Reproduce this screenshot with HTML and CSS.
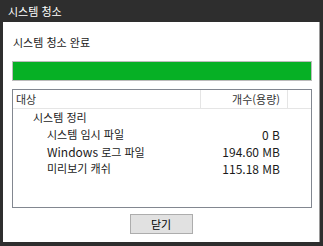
FILE: index.html
```html
<!DOCTYPE html>
<html lang="ko">
<head>
<meta charset="utf-8">
<link rel="stylesheet" href="styles.css">
</head>
<body>
<div class="window">
  <div class="titlebar">시스템 청소</div>
  <div class="client">
    <div class="heading">시스템 청소 완료</div>
    <div class="progress"><div class="fill"></div></div>
    <div class="listbox">
      <div class="header">
        <div class="hcell name">대상</div>
        <div class="hcell size">개수(용량)</div>
        <div class="hcell rest"></div>
      </div>
      <div class="row"><div class="name lvl1">시스템 정리</div><div class="size"></div></div>
      <div class="row"><div class="name lvl2">시스템 임시 파일</div><div class="size">0 B</div></div>
      <div class="row"><div class="name lvl2"><span class="lat">Windows</span> 로그 파일</div><div class="size">194.60 MB</div></div>
      <div class="row"><div class="name lvl2">미리보기 캐쉬</div><div class="size">115.18 MB</div></div>
    </div>
    <div class="actions"><button class="btn">닫기</button></div>
  </div>
</div>
</body>
</html>
```
FILE: styles.css
```css
* { box-sizing: border-box; }
html, body { margin: 0; padding: 0; background: #2e2e2e; }
body {
  font-family: "Noto Sans CJK KR", "Noto Sans", sans-serif;
  font-size: 11px;
  color: #000;
}
.window {
  width: 323px;
  height: 246px;
  background: #2e2e2e;
  display: flex;
  flex-direction: column;
}
.titlebar {
  height: 22px;
  line-height: 22px;
  padding-left: 8px;
  color: #ffffff;
  font-size: 11px;
}
.client {
  flex: 1;
  margin: 0 3px 4px 3px;
  background: #ffffff;
  border-right: 1px solid #9a9a9a;
  display: flex;
  flex-direction: column;
  padding: 12px 0 0 9px;
}
.heading {
  height: 16px;
  line-height: 16px;
  padding-left: 1px;
  color: #1a1a1a;
}
.progress {
  margin-top: 11px;
  width: 300px;
  height: 20px;
  border: 1px solid #bcbcbc;
  background: #e6e6e6;
}
.fill {
  width: 100%;
  height: 100%;
  background: #06b025;
}
.listbox {
  margin-top: 8px;
  width: 300px;
  height: 119px;
  border: 1px solid #828790;
  background: #fff;
}
.header {
  display: flex;
  height: 19px;
  border-bottom: 1px solid #e5e5e5;
}
.hcell {
  height: 18px;
  line-height: 18px;
  border-right: 1px solid #e5e5e5;
}
.header .name { width: 188px; padding-left: 3px; color: #333; }
.header .size { width: 87px; text-align: right; padding-right: 7px; color: #333; }
.header .rest { flex: 1; border-right: none; }
.row {
  display: flex;
  height: 17px;
  line-height: 17px;
  color: #1a1a1a;
}
.row .name { width: 188px; }
.row .size { width: 87px; text-align: right; padding-right: 8px; font-size: 12px; }
.lat { font-size: 12px; }
.lvl1 { padding-left: 20px; }
.lvl2 { padding-left: 34px; }
.actions {
  display: flex;
  justify-content: center;
  margin-top: 6px;
  padding-right: 9px;
}
.btn {
  width: 63px;
  height: 20px;
  padding: 0;
  font-family: inherit;
  font-size: 11px;
  line-height: 18px;
  background: #e1e1e1;
  border: 1px solid #adadad;
  color: #000;
}
```
